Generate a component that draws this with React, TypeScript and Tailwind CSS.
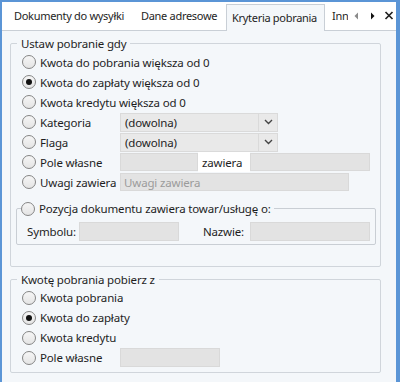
import React from "react";

const font = { fontFamily: '"Noto Sans", "Open Sans", sans-serif' };

function Radio({ checked = false }: { checked?: boolean }) {
  return (
    <span className="relative inline-flex items-center justify-center w-[14px] h-[14px] rounded-full border border-[#858585] bg-gradient-to-b from-[#f6f6f6] to-[#e4e4e4] shrink-0">
      {checked && <span className="w-[6px] h-[6px] rounded-full bg-[#111]" />}
    </span>
  );
}

function RadioRow({ label, checked, labelW, children }: { label: string; checked?: boolean; labelW?: string; children?: React.ReactNode }) {
  return (
    <div className="flex items-center h-[20px] pl-[11px]">
      <Radio checked={checked} />
      <span className={"ml-[4px] whitespace-nowrap " + (labelW ?? "")}>{label}</span>
      {children}
    </div>
  );
}

function Select() {
  return (
    <div className="flex h-[19px] w-[158px] border border-[#dadada] bg-[#e9e9e9]">
      <div className="flex-1 flex items-center pl-[4px] border-r border-[#dadada]">(dowolna)</div>
      <div className="w-[18px] flex items-center justify-center">
        <svg width="9" height="6" viewBox="0 0 9 6"><path d="M1 1 L4.5 4.5 L8 1" fill="none" stroke="#444" strokeWidth="1.4" /></svg>
      </div>
    </div>
  );
}

export default function App() {
  return (
    <div className="w-[400px] h-[382px] bg-[#5b95d6] pt-[2px] pl-[2px] pr-[4px] flex flex-col text-[11.5px] tracking-[-0.15px] text-[#1e1e1e]" style={font}>
      {/* tab strip */}
      <div className="h-[29px] shrink-0 bg-white flex items-end border-b border-[#c9cfd6] whitespace-nowrap text-[11px] tracking-[-0.3px]">
        <div className="flex items-end h-full">
          <div className="h-full flex items-center pl-[12px] w-[134px]">Dokumenty do wysyłki</div>
          <div className="h-full flex items-center pl-[5px] w-[90px]">Dane adresowe</div>
          <div className="h-[27px] mb-[-1px] flex items-center pl-[5px] w-[99px] bg-[#f4f7fa] border-x border-t border-[#c9cfd6]">Kryteria pobrania</div>
          <div className="h-full flex items-center pl-[7px] w-[23px] overflow-hidden">Inne</div>
        </div>
        <div className="h-full flex items-center ml-[1px]">
          <svg width="16" height="10" viewBox="0 0 16 10"><path d="M9 1.5 L5.5 5 L9 8.5 Z" fill="#8a8a8a" /></svg>
          <svg width="16" height="10" viewBox="0 0 16 10"><path d="M6 1.5 L9.5 5 L6 8.5 Z" fill="#111" /></svg>
          <svg width="16" height="10" viewBox="0 0 16 10"><path d="M4.5 1 L11.5 8 M11.5 1 L4.5 8" stroke="#222" strokeWidth="1.7" /></svg>
        </div>
      </div>
      {/* content */}
      <div className="flex-1 bg-[#f4f7fa] pl-[8px] pr-[15px] pt-[4px]">
        <fieldset className="border border-[#d0d5db] rounded-[2px] pb-[21px] pr-[4px]">
          <legend className="ml-[6px] px-[4px]">Ustaw pobranie gdy</legend>
          <div>
            <RadioRow label="Kwota do pobrania większa od 0" />
            <RadioRow label="Kwota do zapłaty większa od 0" checked />
            <RadioRow label="Kwota kredytu większa od 0" />
            <RadioRow label="Kategoria" labelW="w-[80px]"><Select /></RadioRow>
            <RadioRow label="Flaga" labelW="w-[80px]"><Select /></RadioRow>
            <RadioRow label="Pole własne" labelW="w-[80px]">
              <div className="w-[78px] h-[18px] bg-[#e3e3e3] border border-[#d9d9d9]" />
              <div className="w-[52px] h-[20px] bg-white flex items-center pl-[4px]">zawiera</div>
              <div className="w-[120px] h-[18px] bg-[#e3e3e3] border border-[#d9d9d9]" />
            </RadioRow>
            <RadioRow label="Uwagi zawiera" labelW="w-[80px]">
              <div className="w-[229px] h-[18px] bg-[#e3e3e3] border border-[#d9d9d9] flex items-center pl-[3px] text-[#9b9b9b]">Uwagi zawiera</div>
            </RadioRow>
          </div>
          <fieldset className="mt-[8px] ml-[5px] border border-[#c9ced4] rounded-[2px] pt-[4px] pb-[2px]">
            <legend className="ml-[4px] pr-[3px] flex items-center">
              <Radio />
              <span className="ml-[4px]">Pozycja dokumentu zawiera towar/usługę o:</span>
            </legend>
            <div className="flex items-center h-[20px]">
              <span className="w-[62px] pl-[10px]">Symbolu:</span>
              <div className="w-[100px] h-[19px] bg-[#e3e3e3] border border-[#d9d9d9]" />
              <span className="w-[71px] text-right pr-[6px]">Nazwie:</span>
              <div className="w-[120px] h-[19px] bg-[#e3e3e3] border border-[#d9d9d9]" />
            </div>
          </fieldset>
        </fieldset>
        <fieldset className="mt-[4px] border border-[#d0d5db] rounded-[2px] pb-[4px]">
          <legend className="ml-[6px] px-[4px]">Kwotę pobrania pobierz z</legend>
          <RadioRow label="Kwota pobrania" />
          <RadioRow label="Kwota do zapłaty" checked />
          <RadioRow label="Kwota kredytu" />
          <RadioRow label="Pole własne" labelW="w-[80px]">
            <div className="w-[100px] h-[19px] bg-[#e3e3e3] border border-[#d9d9d9]" />
          </RadioRow>
        </fieldset>
      </div>
    </div>
  );
}
